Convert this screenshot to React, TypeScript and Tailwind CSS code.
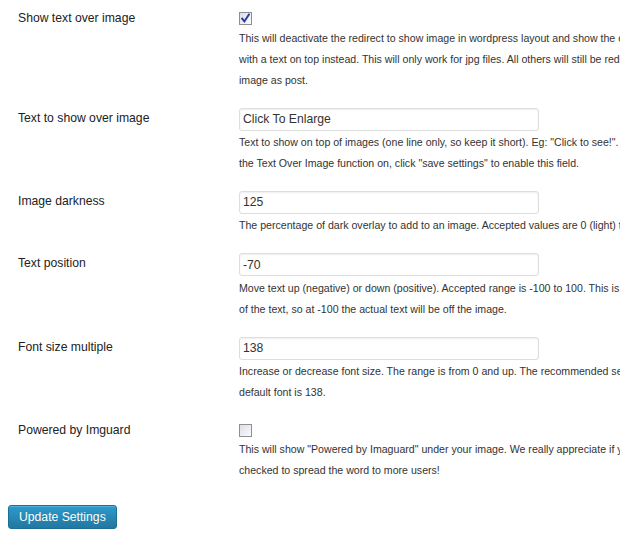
import React from "react";

function CheckBox({ checked }: { checked: boolean }) {
  return (
    <div className="w-[13px] h-[13px] border border-[#8e8f8f] bg-linear-to-br from-[#dcdfe6] to-[#fbfbfc] flex items-center justify-center">
      {checked && (
        <svg width="11" height="11" viewBox="0 0 11 11">
          <path d="M2.2 5.6 L4.4 8.4 L8.9 1.6" fill="none" stroke="#27399a" strokeWidth="1.9" strokeLinecap="square" />
        </svg>
      )}
    </div>
  );
}

function Desc({ lines, className = "" }: { lines: string[]; className?: string }) {
  return (
    <div className={"text-[10.6px] leading-[21px] text-[#333] whitespace-nowrap " + className}>
      {lines.map((l, i) => (
        <div key={i}>{l}</div>
      ))}
    </div>
  );
}

function CheckRow({ label, checked, lines, className = "" }: { label: string; checked: boolean; lines: string[]; className?: string }) {
  return (
    <div className={"flex " + className}>
      <div className="w-[239px] shrink-0 pl-[18px] pt-[3.5px] leading-[13px] text-[12.2px] text-[#222]">{label}</div>
      <div className="flex-1 min-w-0 pt-[3.5px]">
        <CheckBox checked={checked} />
        <Desc lines={lines} className="mt-[2.5px]" />
      </div>
    </div>
  );
}

function InputRow({ label, value, lines, className = "" }: { label: string; value: string; lines: string[]; className?: string }) {
  return (
    <div className={"flex " + className}>
      <div className="w-[239px] shrink-0 pl-[18px] leading-[21px] text-[12.2px] text-[#222]">{label}</div>
      <div className="flex-1 min-w-0">
        <input
          defaultValue={value}
          className="block w-[300px] h-[23px] border border-[#dddddd] rounded-[3px] bg-white pl-[3px] text-[12.2px] text-[#333] shadow-[inset_0_1px_2px_rgba(0,0,0,0.07)] outline-none"
        />
        <Desc lines={lines} className="mt-[1.5px]" />
      </div>
    </div>
  );
}

export default function App() {
  return (
    <div className="w-[620px] h-[545px] overflow-hidden bg-white font-['Liberation_Sans',Arial,sans-serif]">
      <div className="pt-[8.5px]">
        <CheckRow
          label="Show text over image"
          checked={true}
          lines={[
            "This will deactivate the redirect to show image in wordpress layout and show the clean image",
            "with a text on top instead. This will only work for jpg files. All others will still be redirected to show",
            "image as post.",
          ]}
        />
        <InputRow
          className="mt-[17px]"
          label="Text to show over image"
          value="Click To Enlarge"
          lines={[
            "Text to show on top of images (one line only, so keep it short). Eg: \"Click to see!\". If you turn",
            "the Text Over Image function on, click \"save settings\" to enable this field.",
          ]}
        />
        <InputRow
          className="mt-[16.5px]"
          label="Image darkness"
          value="125"
          lines={["The percentage of dark overlay to add to an image. Accepted values are 0 (light) to 255 (dark)."]}
        />
        <InputRow
          className="mt-[17px]"
          label="Text position"
          value="-70"
          lines={[
            "Move text up (negative) or down (positive). Accepted range is -100 to 100. This is the center",
            "of the text, so at -100 the actual text will be off the image.",
          ]}
        />
        <InputRow
          className="mt-[17px]"
          label="Font size multiple"
          value="138"
          lines={[
            "Increase or decrease font size. The range is from 0 and up. The recommended setting for the",
            "default font is 138.",
          ]}
        />
        <CheckRow
          className="mt-[17px]"
          label="Powered by Imguard"
          checked={false}
          lines={[
            "This will show \"Powered by Imaguard\" under your image. We really appreciate if you keep this",
            "checked to spread the word to more users!",
          ]}
        />
      </div>
      <div className="mt-[22.5px] pl-[8px]">
        <button className="h-[24px] px-[10px] rounded-[3px] border border-[#1f6f94] bg-linear-to-b from-[#2d9bcd] to-[#22789f] text-white text-[12.2px] leading-[22px] shadow-[inset_0_1px_0_rgba(120,200,230,0.5)] [text-shadow:0_-1px_0_rgba(0,0,0,0.1)]">
          Update Settings
        </button>
      </div>
    </div>
  );
}
